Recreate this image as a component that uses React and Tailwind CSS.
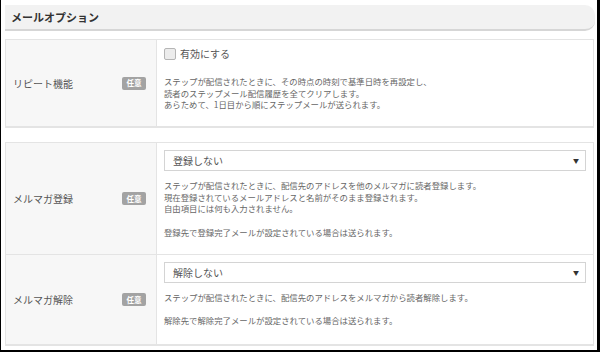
import React from 'react'

const font = { fontFamily: '"Noto Sans CJK JP", "Noto Sans", sans-serif' }

function Badge() {
  return (
    <span className="inline-flex items-center justify-center w-[24px] h-[13px] rounded-[2px] bg-[#a3a3a3] text-white text-[7.5px] font-bold leading-none">
      任意
    </span>
  )
}

function Row({ label, children, className = '' }) {
  return (
    <div className={`flex ${className}`}>
      <div className="w-[151px] shrink-0 bg-[#f7f7f7] border-r border-[#e4e4e4] flex items-center justify-between pl-[7px] pr-[10px]">
        <span className="text-[10px] text-[#555]">{label}</span>
        <Badge />
      </div>
      <div className="flex-1 bg-white px-[7px]">{children}</div>
    </div>
  )
}

function Select({ value }) {
  return (
    <div className="h-[21px] border border-[#d4d4d4] bg-white flex items-center justify-between pl-[8px] pr-[6px]">
      <span className="text-[10px] text-[#555]">{value}</span>
      <span className="text-[6px] text-[#333]">▼</span>
    </div>
  )
}

function Desc({ children }) {
  return <div className="text-[8.4px] leading-[11.7px] text-[#666] whitespace-pre">{children}</div>
}

export default function App() {
  return (
    <div style={font} className="w-[600px] h-[352px] bg-white border-l border-r-[3px] border-b-2 border-black overflow-hidden pl-[4px] pr-[2px] pt-[5px]">
      {/* header */}
      <div className="h-[26px] bg-[#f2f2f2] rounded-r-[10px] border-b-2 border-[#d6d6d6] flex items-center pl-[6px]">
        <span className="text-[11px] font-bold text-[#333]">メールオプション</span>
      </div>

      {/* panel 1 */}
      <div className="mt-[8px] mr-[1px] border border-[#e4e4e4] border-b-2">
        <Row label="リピート機能" className="h-[86px]">
          <div className="pt-[6px] flex items-center gap-[4px]">
            <span className="w-[12px] h-[12px] rounded-[2px] border border-[#b5b5b5] bg-[#ececec]" />
            <span className="text-[10px] text-[#555]">有効にする</span>
          </div>
          <div className="mt-[15px]">
            <Desc>{'ステップが配信されたときに、その時点の時刻で基準日時を再設定し、\n読者のステップメール配信履歴を全てクリアします。\nあらためて、1日目から順にステップメールが送られます。'}</Desc>
          </div>
        </Row>
      </div>

      {/* panel 2 */}
      <div className="mt-[14px] mr-[1px] border border-[#e4e4e4] border-b-2">
        <Row label="メルマガ登録" className="h-[112px] border-b border-[#e4e4e4]">
          <div className="pt-[7px]">
            <Select value="登録しない" />
          </div>
          <div className="mt-[9px]">
            <Desc>{'ステップが配信されたときに、配信先のアドレスを他のメルマガに読者登録します。\n現在登録されているメールアドレスと名前がそのまま登録されます。\n自由項目には何も入力されません。\n\n登録先で登録完了メールが設定されている場合は送られます。'}</Desc>
          </div>
        </Row>
        <Row label="メルマガ解除" className="h-[89px]">
          <div className="pt-[7px]">
            <Select value="解除しない" />
          </div>
          <div className="mt-[9px]">
            <Desc>{'ステップが配信されたときに、配信先のアドレスをメルマガから読者解除します。\n\n解除先で解除完了メールが設定されている場合は送られます。'}</Desc>
          </div>
        </Row>
      </div>
    </div>
  )
}
